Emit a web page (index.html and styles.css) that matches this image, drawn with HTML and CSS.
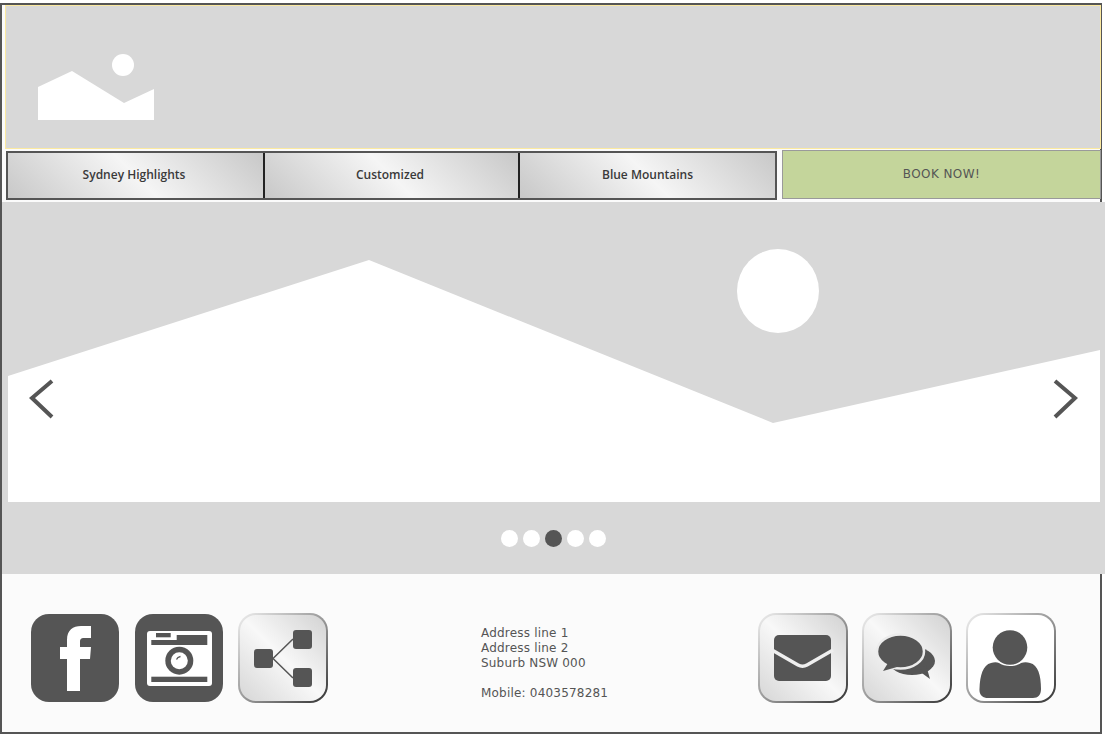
FILE: index.html
```html
<!DOCTYPE html>
<html lang="en">
<head>
<meta charset="utf-8">
<title>Sydney Tours</title>
<link rel="stylesheet" href="styles.css">
</head>
<body>
<div class="page">
  <header class="banner">
    <svg class="logo" viewBox="0 0 117 67" width="117" height="67">
      <circle cx="85" cy="11" r="11" fill="#fff"/>
      <path d="M0 33 L34 17 L86 49 L116 35 V66 H0 Z" fill="#fff"/>
    </svg>
  </header>
  <nav class="nav">
    <div class="tabs">
      <a class="tab">Sydney Highlights</a>
      <a class="tab">Customized</a>
      <a class="tab">Blue Mountains</a>
    </div>
    <a class="book">BOOK NOW!</a>
  </nav>
  <section class="hero">
    <svg class="scene" viewBox="0 0 1103 300" width="1103" height="300">
      <ellipse cx="776" cy="89" rx="41" ry="42" fill="#fff"/>
      <path d="M6 174 L367 58 L771 221 L1098 148 V300 H6 Z" fill="#fff"/>
      <path d="M50 179 L30 196 L50 215" fill="none" stroke="#555" stroke-width="4"/>
      <path d="M1053 179 L1073 196 L1053 215" fill="none" stroke="#555" stroke-width="4"/>
    </svg>
    <div class="dots">
      <span class="dot"></span><span class="dot"></span><span class="dot on"></span><span class="dot"></span><span class="dot"></span>
    </div>
  </section>
  <footer class="footer">
    <div class="group group-left">
      <span class="tile dark">
        <svg viewBox="0 0 88 88" width="88" height="88"><path fill="#fff" d="M36 77V45H29V33H36V26C36 16 42 12 50 12H60V24H53C50 24 49 25 49 28V33H60L59 45H49V77Z"/></svg>
      </span>
      <span class="tile dark">
        <svg viewBox="0 0 88 88" width="88" height="88">
          <rect x="12" y="17" width="65" height="55" rx="3" fill="#fff"/>
          <path fill="#555" d="M16.300 26H41.700V21H72.300V31H16.300Z"/>
          <rect x="21" y="19" width="14.700" height="4.300" fill="#555"/>
          <rect x="16.300" y="62.700" width="56" height="5.300" fill="#555"/>
          <circle cx="44.300" cy="46.700" r="14" fill="#555"/>
          <circle cx="44.300" cy="46.700" r="8.500" fill="#fff"/>
          <path d="M41.500 45.500 Q42.500 43 45.500 42.500" fill="none" stroke="#555" stroke-width="1.300"/>
        </svg>
      </span>
      <span class="tile metal">
        <svg viewBox="0 0 86 86" width="86" height="86">
          <path d="M33 43.500 L53 24 M33 43.500 L53 63" stroke="#555" stroke-width="1.500" fill="none"/>
          <rect x="14" y="34" width="19" height="19" rx="3" fill="#555"/>
          <rect x="53" y="15" width="19" height="19" rx="3" fill="#555"/>
          <rect x="53" y="53" width="19" height="19" rx="3" fill="#555"/>
        </svg>
      </span>
    </div>
    <address class="contact">Address line 1<br>Address line 2<br>Suburb NSW 000<br><br>Mobile: 0403578281</address>
    <div class="group group-right">
      <span class="tile metal">
        <svg viewBox="0 0 86 86" width="86" height="86">
          <rect x="14" y="20" width="57" height="46" rx="5" fill="#555"/>
          <path d="M12 35 L38 50 Q42.500 52.500 47 50 L73 35" fill="none" stroke="#efefef" stroke-width="3.500"/>
        </svg>
      </span>
      <span class="tile metal">
        <svg viewBox="0 0 86 86" width="86" height="86">
          <ellipse cx="48" cy="46" rx="23" ry="14" fill="#555"/>
          <path d="M55 56 L66 64 L62 50 Z" fill="#555"/>
          <ellipse cx="36.500" cy="36.500" rx="23.500" ry="17" fill="#555" stroke="#ececec" stroke-width="2.500"/>
          <path d="M24 48 L19 56 L33 52 Z" fill="#555"/>
        </svg>
      </span>
      <span class="tile metal plain">
        <svg viewBox="0 0 86 86" width="86" height="86">
          <circle cx="42" cy="32.500" r="17.300" fill="#555"/>
          <path fill="#555" d="M11.500 74C12 60 15 50 23 48C26 47 29 47 31 48C36 52 48 52 53 48C56 47 59 47 62 48C70 50 73 60 73 74C73 80 70 83 65 83H20C15 83 11 80 11.500 74Z"/>
        </svg>
      </span>
    </div>
  </footer>
</div>
</body>
</html>
```
FILE: styles.css
```css
* { box-sizing: border-box; }
html, body { margin: 0; padding: 0; background: #fff; }
body { width: 1105px; height: 739px; overflow: hidden; }
.page {
  width: 1102px;
  height: 731px;
  margin-top: 3px;
  border: 2px solid #555;
  background: #fbfbfb;
  display: flex;
  flex-direction: column;
}
.banner {
  height: 144px;
  margin-left: 3px;
  margin-right: -1px;
  background: #d8d8d8;
  border: 1px solid #fbe9a0;
  display: flex;
  align-items: flex-start;
  padding: 48px 0 0 32px;
}
.logo { display: block; }
.nav {
  height: 53px;
  display: flex;
  padding: 2px 0 0 4px;
  align-items: flex-start;
}
.tabs {
  width: 771px;
  height: 49px;
  border: 2px solid #555;
  display: grid;
  grid-template-columns: 255px 255px 1fr;
}
.tab {
  font: 600 12px/44px "Open Sans", sans-serif;
  color: #3a3a3a;
  text-align: center;
  background: linear-gradient(45deg, #c8c8c8, #f5f5f5 50%, #c8c8c8);
}
.tab:nth-child(1), .tab:nth-child(2) { padding-right: 3px; }
.tab + .tab { border-left: 2px solid #222; }
.book {
  width: 319px;
  height: 49px;
  margin-left: 5px;
  margin-right: -1px;
  margin-top: -1px;
  background: #c4d59b;
  border: 1px solid #9a9a9a;
  font: 12px/46px "DejaVu Sans", sans-serif;
  letter-spacing: 0.400px;
  color: #555;
  text-align: center;
}
.hero {
  width: 1103px;
  height: 372px;
  margin-right: -5px;
  background: #d8d8d8;
  flex: none;
}
.scene { display: block; height: 300px; }
.dots {
  display: flex;
  justify-content: center;
  gap: 5px;
  margin-top: 28px;
  padding-right: 1px;
}
.dot { width: 17px; height: 17px; border-radius: 50%; background: #fff; }
.dot.on { background: #555; }
.footer {
  flex: 1;
  display: flex;
  align-items: flex-start;
  padding: 40px 0 0 29px;
}
.group { display: flex; gap: 16px; }
.group-left .metal { margin-left: -1px; }
.group-right { margin-left: auto; margin-right: 44px; gap: 14px; }
.tile {
  width: 88px;
  height: 88px;
  display: block;
  border-radius: 18px;
  flex: none;
}
.tile svg { display: block; }
.dark { background: #555; }
.metal {
  width: 90px;
  height: 90px;
  margin-top: -1px;
  border: 2px solid transparent;
  background:
    linear-gradient(45deg, #d6d6d6, #f8f8f8 50%, #d2d2d2) padding-box,
    linear-gradient(135deg, #eee 0%, #aaa 40%, #888 60%, #333 100%) border-box;
}
.plain {
  background:
    linear-gradient(#fff, #fff) padding-box,
    linear-gradient(135deg, #eee 0%, #aaa 40%, #888 60%, #333 100%) border-box;
}
.contact {
  font: normal 12px/15px "DejaVu Sans", sans-serif;
  color: #555;
  letter-spacing: 0.200px;
  margin: 12px 0 0 153px;
}
```
